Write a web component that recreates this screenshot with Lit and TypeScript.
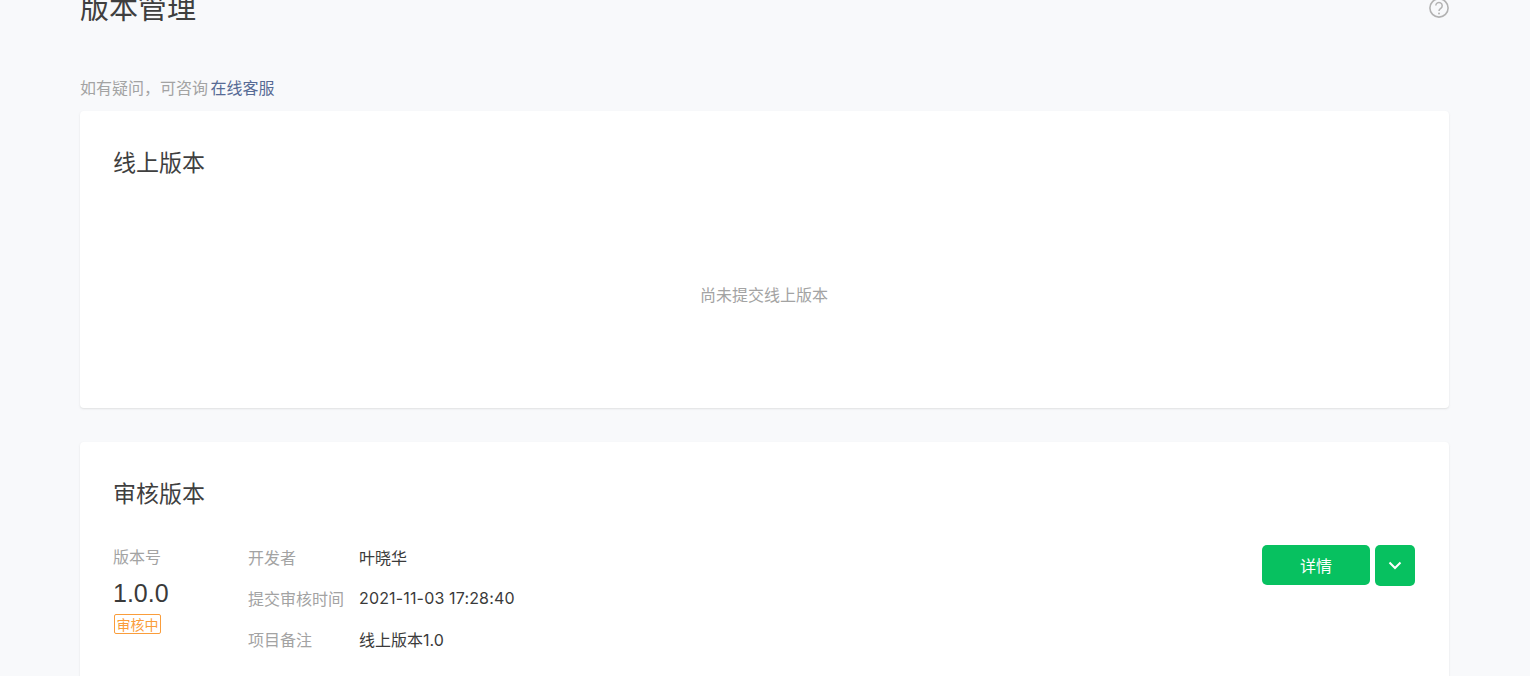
import { LitElement, html, css } from "lit";
import { customElement } from "lit/decorators.js";

@customElement("app-root")
export class AppRoot extends LitElement {
  static styles = css`
    :host {
      display: block;
      height: 676px;
      overflow: hidden;
      background: #f8f9fb;
      font-family: "Noto Sans CJK SC", sans-serif;
      color: #3a3a3a;
    }
    .page {
      margin-top: -16px;
      padding: 0 81px 0 80px;
    }
    .head {
      display: flex;
      justify-content: space-between;
      align-items: center;
      height: 48px;
    }
    h1 {
      margin: 0 0 4px;
      font-size: 29px;
      font-weight: 400;
      line-height: 44px;
      color: #3f3f3f;
    }
    .help {
      display: block;
      width: 20px;
      height: 20px;
    }
    .hint {
      margin: 43px 0 12px;
      font-size: 16px;
      line-height: 24px;
      color: #a3a3a3;
    }
    .hint a {
      color: #576b95;
      text-decoration: none;
      margin-left: -1px;
    }
    .card {
      background: #fff;
      border-radius: 4px;
      box-shadow: 0 1px 2px rgba(150, 150, 150, 0.25);
      padding: 32px 34px 0 33px;
      margin-bottom: 34px;
    }
    h2 {
      margin: 0;
      font-size: 23px;
      font-weight: 400;
      line-height: 36px;
      color: #3f3f3f;
    }
    .empty {
      height: 227px;
      padding: 1px 0;
      display: flex;
      align-items: center;
      justify-content: center;
      font-size: 16px;
      color: #a3a3a3;
    }
    .review {
      height: 301px;
    }
    .body {
      display: flex;
      margin-top: 34px;
    }
    .ver {
      width: 135px;
      flex: none;
    }
    .label {
      font-size: 16px;
      line-height: 24px;
      color: #a3a3a3;
    }
    .num {
      font-size: 25px;
      line-height: 36px;
      margin-top: 7px;
      font-family: "Liberation Sans", sans-serif;
      color: #3a3a3a;
    }
    .tag {
      display: block;
      box-sizing: border-box;
      width: 47px;
      height: 20px;
      border: 1px solid #fa9d3b;
      border-radius: 2px;
      color: #fa9d3b;
      font-size: 14px;
      line-height: 18px;
      text-align: center;
      margin: 3px 0 0 1px;
    }
    .meta {
      display: grid;
      grid-template-columns: 111px auto;
      grid-auto-rows: 41px;
      flex: 1;
      align-items: center;
      margin-top: -8px;
      font-size: 16px;
    }
    .val {
      font-family: "Inter", "Noto Sans CJK SC", sans-serif;
      font-size: 16px;
      color: #3a3a3a;
    }
    .time {
      letter-spacing: 0.16px;
    }
    .actions {
      display: flex;
      align-items: flex-start;
      gap: 5px;
      margin-top: 1px;
    }
    button {
      border: 0;
      padding: 0;
      font: inherit;
      background: #07c160;
      color: #fff;
      border-radius: 5px;
      display: flex;
      align-items: center;
      justify-content: center;
    }
    .detail {
      width: 108px;
      height: 40px;
      font-size: 16px;
    }
    .more {
      width: 40px;
      height: 41px;
    }
    .more svg {
      display: block;
    }
  `;

  render() {
    return html`
      <div class="page">
        <div class="head">
          <h1>版本管理</h1>
          <svg class="help" viewBox="0 0 20 20" fill="none">
            <circle cx="10" cy="10" r="9.1" stroke="#b2b2b2" stroke-width="1.6"></circle>
            <path d="M6.8 7.6a3.2 3.2 0 1 1 5 2.7c-1 .7-1.8 1.2-1.8 2.6" stroke="#b2b2b2" stroke-width="1.5"></path>
            <circle cx="10" cy="15.4" r="1" fill="#b2b2b2"></circle>
          </svg>
        </div>
        <p class="hint">如有疑问，可咨询 <a>在线客服</a></p>
        <section class="card">
          <h2>线上版本</h2>
          <div class="empty">尚未提交线上版本</div>
        </section>
        <section class="card review">
          <h2>审核版本</h2>
          <div class="body">
            <div class="ver">
              <div class="label">版本号</div>
              <div class="num">1.0.0</div>
              <span class="tag">审核中</span>
            </div>
            <div class="meta">
              <span class="label">开发者</span><span class="val">叶晓华</span>
              <span class="label">提交审核时间</span><span class="val time">2021-11-03 17:28:40</span>
              <span class="label">项目备注</span><span class="val">线上版本1.0</span>
            </div>
            <div class="actions">
              <button class="detail">详情</button>
              <button class="more" aria-label="更多">
                <svg width="14" height="9" viewBox="0 0 14 9" fill="none">
                  <path d="M1.5 1.5 7 7l5.5-5.5" stroke="#fff" stroke-width="2"></path>
                </svg>
              </button>
            </div>
          </div>
        </section>
      </div>
    `;
  }
}
